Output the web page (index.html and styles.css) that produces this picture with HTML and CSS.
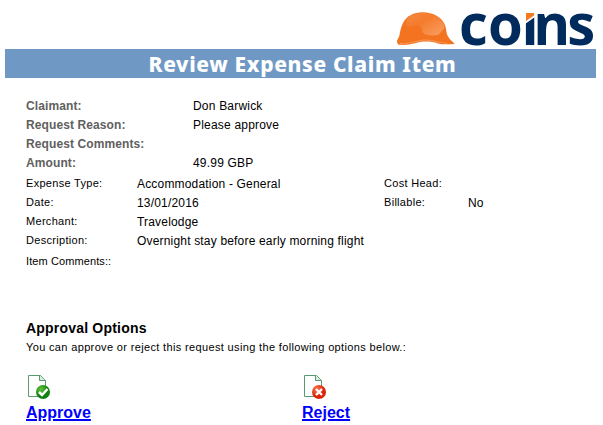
FILE: index.html
```html
<!DOCTYPE html>
<html lang="en">
<head>
<meta charset="utf-8">
<title>Review Expense Claim Item</title>
<link rel="stylesheet" href="styles.css">
</head>
<body>
<header class="brand">
  <svg class="helmet" viewBox="0 0 60 36" width="60" height="36">
    <defs><linearGradient id="shine" x1="0" y1="0" x2="1" y2="1"><stop offset="0" stop-color="#f68a43"/><stop offset=".4" stop-color="#f47b2b"/><stop offset="1" stop-color="#f9a066"/></linearGradient></defs>
    <path fill="#f47321" d="M0 30C0 27 2 26 2.500 23C4 14 7 6 14 3C19 0 27-.5 34 1.500C43 4 48 10 49 17C49.500 21 50 23 52 26C54 29 57 30 57.500 32C52 32 47 33 41 31.500C34 29 26 29 19 31C12 33 5 33.500 1 32.500Z"/>
    <path fill="url(#shine)" d="M9 10C11 4 17 1 25 1C37 1 46 7 47.500 15C47 18 45 18 44 20C42 24 35 24 29 22.500C23 21 27 15 21 13.500C16 12.500 14 17 11 14C10 13 9 13 9 10Z"/>
    <path fill="none" stroke="#f9a066" stroke-width=".8" d="M3 31.500C12 32.500 20 28 29 28C37 28 42 31 50 31.300"/>
  </svg>
  <svg class="wordmark" viewBox="0 0 136 35" width="136" height="35" role="img" aria-label="coins">
    <text class="wordmark-text" transform="scale(.97 1)" y="33" x="-1 29 63.500 75.500 110.500">coıns</text>
    <path fill="#fff" d="M65 0H75V5L65 12Z"/>
    <path fill="#f47b20" d="M66 1H74V3.500L66 9Z"/>
  </svg>
</header>
<h1 class="title"><span>Review Expense Claim Item</span></h1>
<main>
  <dl class="summary">
    <dt>Claimant:</dt><dd>Don Barwick</dd>
    <dt>Request Reason:</dt><dd>Please approve</dd>
    <dt>Request Comments:</dt><dd></dd>
    <dt>Amount:</dt><dd>49.99 GBP</dd>
  </dl>
  <dl class="details">
    <dt>Expense Type:</dt><dd>Accommodation - General</dd><dt>Cost Head:</dt><dd></dd>
    <dt>Date:</dt><dd>13/01/2016</dd><dt>Billable:</dt><dd>No</dd>
    <dt>Merchant:</dt><dd class="span">Travelodge</dd>
    <dt>Description:</dt><dd class="span">Overnight stay before early morning flight</dd>
    <dt class="last">Item Comments::</dt>
  </dl>
  <h2>Approval Options</h2>
  <p class="hint">You can approve or reject this request using the following options below.:</p>
  <div class="actions">
    <div>
      <svg viewBox="0 0 24 25" width="24" height="25">
        <defs><radialGradient id="green" cx=".35" cy=".3"><stop offset="0" stop-color="#5fc43a"/><stop offset="1" stop-color="#108010"/></radialGradient></defs>
        <path fill="#fff" stroke="#59996f" d="M.5.5H12.5L17.500 5.500V21.500H.5Z"/><path fill="#dcebe0" stroke="#59996f" d="M11.500.5V5.500H17.500"/>
        <circle cx="15" cy="17" r="7" fill="url(#green)"/>
        <path fill="none" stroke="#fff" stroke-width="2.500" d="M11 17L14 20L19.500 14"/>
      </svg>
      <a href="#approve">Approve</a>
    </div>
    <div>
      <svg viewBox="0 0 24 25" width="24" height="25">
        <defs><radialGradient id="red" cx=".35" cy=".3"><stop offset="0" stop-color="#ff7a55"/><stop offset="1" stop-color="#dc2406"/></radialGradient></defs>
        <path fill="#fff" stroke="#59996f" d="M.5.5H12.500L17.500 5.500V21.500H.5Z"/><path fill="#dcebe0" stroke="#59996f" d="M11.500.5V5.500H17.500"/>
        <circle cx="15" cy="17" r="7" fill="url(#red)"/>
        <path fill="none" stroke="#fff" stroke-width="2.300" d="M12 14L18 20M18 14L12 20"/>
      </svg>
      <a href="#reject">Reject</a>
    </div>
  </div>
</main>
</body>
</html>
```
FILE: styles.css
```css
* { box-sizing: border-box; }
body { margin: 0; padding: 0 7px 0 5px; background: #fff; color: #000; font: 12px/19px "Liberation Sans", Arial, sans-serif; }
h1, h2, p, dl, dd { margin: 0; }
.brand { display: flex; justify-content: flex-end; height: 49px; padding-top: 12px; }
.helmet { margin-right: 3px; }
.wordmark { overflow: visible; }
.wordmark-text { font: bold 58px "Open Sans", sans-serif; fill: #002b5c; }
.title { height: 29px; background: #6f99c4; color: #fff; text-align: center; font: 800 21px/30px "Noto Sans", sans-serif; letter-spacing: 0.65px; padding-left: 4px; }
main { padding: 19px 0 0 21px; }
.summary { display: grid; grid-template-columns: 167px 1fr; grid-auto-rows: 19px; }
.summary dt { font-weight: bold; color: #606060; letter-spacing: .1px; }
.summary dd { letter-spacing: .2px; }
.details { display: grid; grid-template-columns: 111px 247px 84px 1fr; grid-auto-rows: 19px; margin-top: 2px; }
.details dt { font-size: 11px; line-height: 17px; letter-spacing: .3px; }
.details dd { letter-spacing: .18px; line-height: 18px; }
.details .span { grid-column: span 3; }
.details .last { padding-top: 2px; letter-spacing: .1px; }
h2 { margin-top: 48px; font-size: 14px; line-height: 20px; letter-spacing: .2px; }
.hint { font-size: 11px; line-height: 18px; letter-spacing: .35px; }
.actions { display: grid; grid-template-columns: 276px 1fr; margin-top: 19px; }
.actions svg { display: block; margin-left: 2px; }
.actions a { display: inline-block; margin-top: 3px; font-size: 16px; line-height: 20px; font-weight: bold; color: #00f; text-decoration-thickness: 2px; }
```
